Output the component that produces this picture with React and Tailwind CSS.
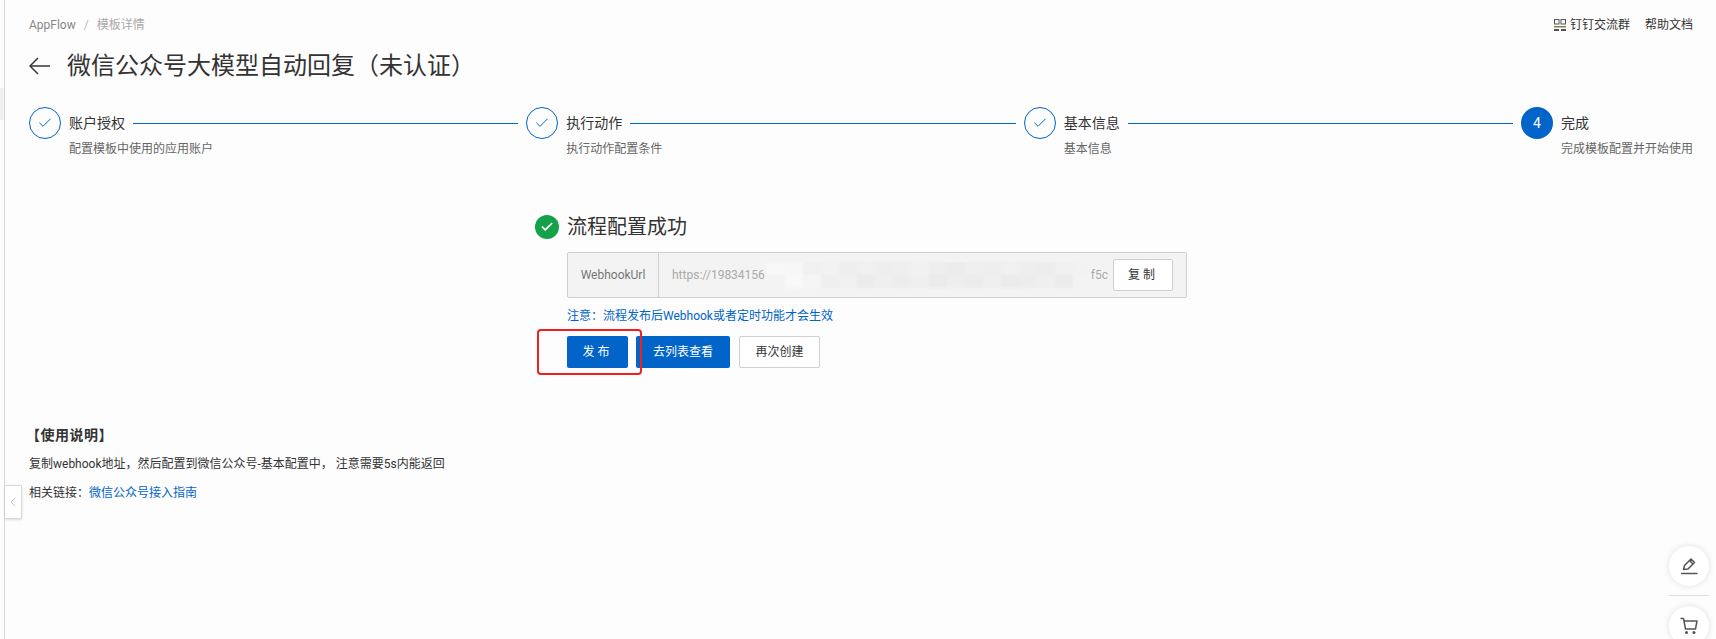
import { Check, ChevronLeft } from "lucide-react";

const steps = [
  { title: "账户授权", desc: "配置模板中使用的应用账户" },
  { title: "执行动作", desc: "执行动作配置条件" },
  { title: "基本信息", desc: "基本信息" },
];

// pixelated mask over the webhook address
const maskTop = ["#f8f8f8", "#f7f7f7", "#f0f0f0", "#f2f2f2", "#eeeeee", "#f0f0f0", "#eeeeee", "#efefef", "#f1f1f1", "#eeeeee", "#ececec", "#efefef", "#eeeeee", "#f0f0f0", "#eeeeee", "#ededed", "#f0f0f0", "#f2f2f2"];
const maskBottom = ["#f3f3f3", "#f8f8f8", "#f5f5f5", "#efefef", "#f0f0f0", "#ececec", "#efefef", "#ededed", "#efefef", "#ebebeb", "#eeeeee", "#ececec", "#efefef", "#ebebeb", "#ededed", "#efefef", "#ececec", "#f3f3f3"];

const QrMark = () => (
  <svg width="12" height="12" viewBox="0 0 12 12" className="mr-[4px]">
    <rect x="0.5" y="0.5" width="4.5" height="4.5" fill="none" stroke="#555" />
    <rect x="7" y="0.5" width="4.5" height="4.5" fill="none" stroke="#555" />
    <rect x="0" y="7" width="12" height="1.5" fill="#8a7a55" />
    <rect x="0" y="10" width="5" height="2" fill="#555" />
    <rect x="7" y="10" width="5" height="2" fill="#555" />
  </svg>
);

const BackArrow = () => (
  <svg width="22" height="18" viewBox="0 0 22 18" fill="none" stroke="#333" strokeWidth="1.5">
    <path d="M1 9 H21" />
    <path d="M9 1 L1 9 L9 17" />
  </svg>
);

const PenMark = () => (
  <svg width="20" height="20" viewBox="0 0 20 20" fill="none" stroke="#555" strokeWidth="1.5">
    <path d="M4.5 13.5 L5.5 9.5 L12 3 L15.5 6.5 L9 13 Z" strokeLinejoin="round" />
    <path d="M10.5 4.5 L14 8" />
    <path d="M2 17.5 H18.5" />
  </svg>
);

const CartMark = () => (
  <svg width="20" height="20" viewBox="0 0 20 20" fill="none" stroke="#555" strokeWidth="1.5">
    <path d="M1.5 2.5 H4.5 L6.5 13 H16.5 L18 5 H5" strokeLinejoin="round" />
    <circle cx="7.5" cy="16.5" r="1.5" fill="#555" stroke="none" />
    <circle cx="15" cy="16.5" r="1.5" fill="#555" stroke="none" />
  </svg>
);

const Step = ({ title, desc }) => (
  <div className="flex-1 flex items-start">
    <div className="w-8 h-8 shrink-0 rounded-full border border-[#0064c8] flex items-center justify-center">
      <Check size={16} strokeWidth={1.5} className="text-[#0064c8]" />
    </div>
    <div className="flex-1 ml-[8px]">
      <div className="flex items-center h-8 pr-2">
        <span className="text-[14px] text-[#333] shrink-0">{title}</span>
        <div className="flex-1 h-px bg-[#0064c8] ml-2" />
      </div>
      <div className="text-[12px] leading-[18px] text-[#666] mt-[1px]">{desc}</div>
    </div>
  </div>
);

export default function App() {
  return (
    <div className="relative h-[639px] overflow-hidden bg-[#fdfdfd] font-['Roboto','Noto_Sans_CJK_SC',sans-serif]">
      <div className="h-full ml-1 border-l border-[#d8d8d8] pl-6 pr-[38px]">
        {/* top bar */}
        <div className="flex items-center justify-between h-[46px] pt-[4px] text-[12px]">
          <div className="text-[#888]">
            <span>AppFlow</span>
            <span className="mx-2 text-[#bbb]">/</span>
            <span className="text-[#aaa]">模板详情</span>
          </div>
          <div className="flex items-center text-[#333] mr-[-15px]">
            <QrMark />
            <span>钉钉交流群</span>
            <span className="ml-[15px]">帮助文档</span>
          </div>
        </div>

        {/* title */}
        <div className="flex items-center h-10">
          <BackArrow />
          <h1 className="ml-[16px] text-[24px] leading-10 text-[#333]">微信公众号大模型自动回复（未认证）</h1>
        </div>

        {/* steps */}
        <div className="flex mt-[21px]">
          {steps.map((s) => <Step key={s.title} {...s} />)}
          <div className="w-[157px] shrink-0 flex items-start">
            <div className="w-8 h-8 shrink-0 rounded-full bg-[#0064c8] text-white text-[14px] flex items-center justify-center">4</div>
            <div className="ml-[8px]">
              <div className="flex items-center h-8 text-[14px] text-[#333]">完成</div>
              <div className="text-[12px] leading-[18px] text-[#666] mt-[1px] whitespace-nowrap">完成模板配置并开始使用</div>
            </div>
          </div>
        </div>

        {/* result */}
        <div className="ml-[506px] w-[620px] mt-[55px]">
          <div className="flex items-center">
            <div className="w-6 h-6 rounded-full bg-[#15a04a] flex items-center justify-center">
              <Check size={14} strokeWidth={3} className="text-white" />
            </div>
            <span className="ml-2 text-[20px] leading-7 text-[#333]">流程配置成功</span>
          </div>

          <div className="ml-8 mt-[11px] w-[620px] h-[46px] flex items-center border border-[#cfcfcf] rounded-[2px] bg-[#f3f3f3]">
            <div className="w-[91px] h-full border-r border-[#cfcfcf] flex items-center justify-center text-[12px] text-[#777]">WebhookUrl</div>
            <span className="ml-[13px] text-[12px] text-[#aaa]">https://19834156</span>
            <div className="flex-1 min-w-0 h-[26px] ml-[2px] flex overflow-hidden flex-col rounded-r-full blur-[1px]">
              <div className="flex h-1/2">
                {maskTop.map((c, i) => <div key={i} className="flex-1" style={{ backgroundColor: c }} />)}
              </div>
              <div className="flex h-1/2">
                {maskBottom.map((c, i) => <div key={i} className="flex-1" style={{ backgroundColor: c }} />)}
              </div>
            </div>
            <span className="text-[12px] text-[#aaa]">f5c</span>
            <button className="ml-[5px] mr-[13px] w-[60px] h-[32px] bg-white border border-[#cfcfcf] rounded-[2px] text-[12px] text-[#333] tracking-[3px]">复制</button>
          </div>

          <div className="ml-8 mt-[9px] text-[12px] leading-[18px] text-[#0064c8]">注意：流程发布后Webhook或者定时功能才会生效</div>

          <div className="relative ml-8 mt-[11px] flex items-center text-[12px]">
            <button className="w-[61px] h-8 bg-[#0064c8] text-white rounded-[2px] tracking-[3px]">发布</button>
            <button className="ml-[8px] w-[94px] h-8 bg-[#0064c8] text-white rounded-[2px]">去列表查看</button>
            <button className="ml-[9px] w-[81px] h-8 bg-white border border-[#cfcfcf] rounded-[2px] text-[#333]">再次创建</button>
            <div className="absolute left-[-30px] top-[-7px] w-[105px] h-[46px] border-2 border-[#f02020] rounded-[4px]" />
          </div>
        </div>

        {/* usage notes */}
        <div className="mt-[58px] text-[12px] text-[#333]">
          <div className="font-bold text-[14px] leading-[18px] tracking-[0.5px] ml-[-3px]">【使用说明】</div>
          <div className="mt-[11px] leading-[18px]">复制webhook地址，然后配置到微信公众号-基本配置中， 注意需要5s内能返回</div>
          <div className="mt-[11px] leading-[18px]">
            相关链接：<span className="text-[#0064c8]">微信公众号接入指南</span>
          </div>
        </div>
      </div>

      {/* left collapse handle */}
      <div className="absolute left-[5px] top-[485px] w-[17px] h-[34px] bg-white border border-l-0 border-[#d8d8d8] shadow-sm flex items-center justify-center">
        <ChevronLeft size={16} strokeWidth={1} className="text-[#aaa]" />
      </div>
      <div className="absolute left-0 top-[88px] w-1 h-[32px] bg-[#f0f0f0]" />

      {/* floating tools */}
      <div className="absolute left-[1669px] top-[546px] w-10 flex flex-col items-center">
        <div className="w-10 h-10 rounded-full bg-white shadow-[0_0_6px_rgba(0,0,0,0.12)] flex items-center justify-center">
          <PenMark />
        </div>
        <div className="w-10 h-px bg-[#ddd] mt-[9px]" />
        <div className="w-10 h-10 mt-[10px] rounded-full bg-white shadow-[0_0_6px_rgba(0,0,0,0.12)] flex items-center justify-center">
          <CartMark />
        </div>
      </div>
    </div>
  );
}
